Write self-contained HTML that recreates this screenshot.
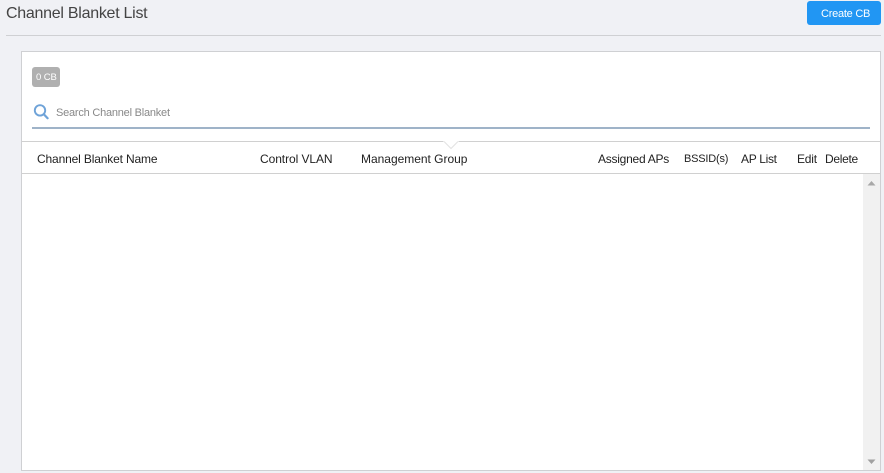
<!DOCTYPE html>
<html>
<head>
<meta charset="utf-8">
<style>
html,body{margin:0;padding:0;width:884px;height:473px;overflow:hidden;background:#f0f1f5;}
body{position:relative;font-family:"Liberation Sans",sans-serif;}
.a{position:absolute;}
.t{position:absolute;white-space:nowrap;font-size:12px;line-height:14px;color:#222;}
</style>
</head>
<body>
<div class="t" style="left:6px;top:4px;font-size:16px;line-height:20px;color:#444;letter-spacing:-.27px;">Channel Blanket List</div>
<div class="a" style="left:807px;top:1px;width:74px;height:24px;background:#2196f3;border-radius:3px;"></div>
<div class="t" style="left:821px;top:7px;color:#fff;font-size:11px;letter-spacing:-.25px;">Create CB</div>
<div class="a" style="left:6px;top:35px;width:875px;height:1px;background:#cfd0d3;"></div>

<div class="a" style="left:21px;top:51px;width:858px;height:418px;background:#fff;border:1px solid #cfd0d3;"></div>

<div class="a" style="left:32px;top:67px;width:28px;height:20px;background:#b0b0b0;border-radius:3px;"></div>
<div class="t" style="left:36px;top:71px;color:#fff;font-size:9.5px;line-height:14px;letter-spacing:-.1px;">0 CB</div>

<svg class="a" style="left:33px;top:103px;" width="16" height="17" viewBox="0 0 16 17">
<circle cx="7" cy="7.4" r="5.2" fill="none" stroke="#6fa3d8" stroke-width="1.9"/>
<path d="M10.8 11.2L14.6 15.2" stroke="#6fa3d8" stroke-width="2.2" stroke-linecap="round"/>
</svg>
<div class="t" style="left:56px;top:106px;font-size:11px;color:#888;letter-spacing:-.22px;">Search Channel Blanket</div>
<div class="a" style="left:32px;top:127px;width:838px;height:2px;background:#9fb3c8;"></div>

<div class="a" style="left:22px;top:141px;width:858px;height:1px;background:#d0d0d0;"></div>
<svg class="a" style="left:443px;top:141px;" width="16" height="9" viewBox="0 0 16 9">
<path d="M0 0L8 8L16 0Z" fill="#fff"/>
<path d="M1 0.5L8 7.5L15 0.5" fill="none" stroke="#e2e2e2" stroke-width="1"/>
</svg>

<div class="t" style="left:37px;top:152px;letter-spacing:-.15px;">Channel Blanket Name</div>
<div class="t" style="left:260px;top:152px;letter-spacing:-.07px;">Control VLAN</div>
<div class="t" style="left:361px;top:152px;letter-spacing:-.02px;">Management Group</div>
<div class="t" style="left:598px;top:152px;letter-spacing:-.25px;">Assigned APs</div>
<div class="t" style="left:684px;top:152px;font-size:11px;letter-spacing:-.2px;">BSSID(s)</div>
<div class="t" style="left:741px;top:152px;letter-spacing:-.3px;">AP List</div>
<div class="t" style="left:797px;top:152px;letter-spacing:-.2px;">Edit</div>
<div class="t" style="left:825px;top:152px;letter-spacing:-.3px;">Delete</div>

<div class="a" style="left:22px;top:173px;width:858px;height:1px;background:#d0d0d0;"></div>

<div class="a" style="left:863px;top:174px;width:17px;height:296px;background:#f1f1f1;"></div>
<svg class="a" style="left:867px;top:180px;" width="9" height="6" viewBox="0 0 9 6"><path d="M4.5 1L8.5 5.5H.5Z" fill="#a8a8a8"/></svg>
<svg class="a" style="left:867px;top:459px;" width="9" height="6" viewBox="0 0 9 6"><path d="M.5 .5H8.5L4.5 5Z" fill="#a0a0a0"/></svg>
</body>
</html>
